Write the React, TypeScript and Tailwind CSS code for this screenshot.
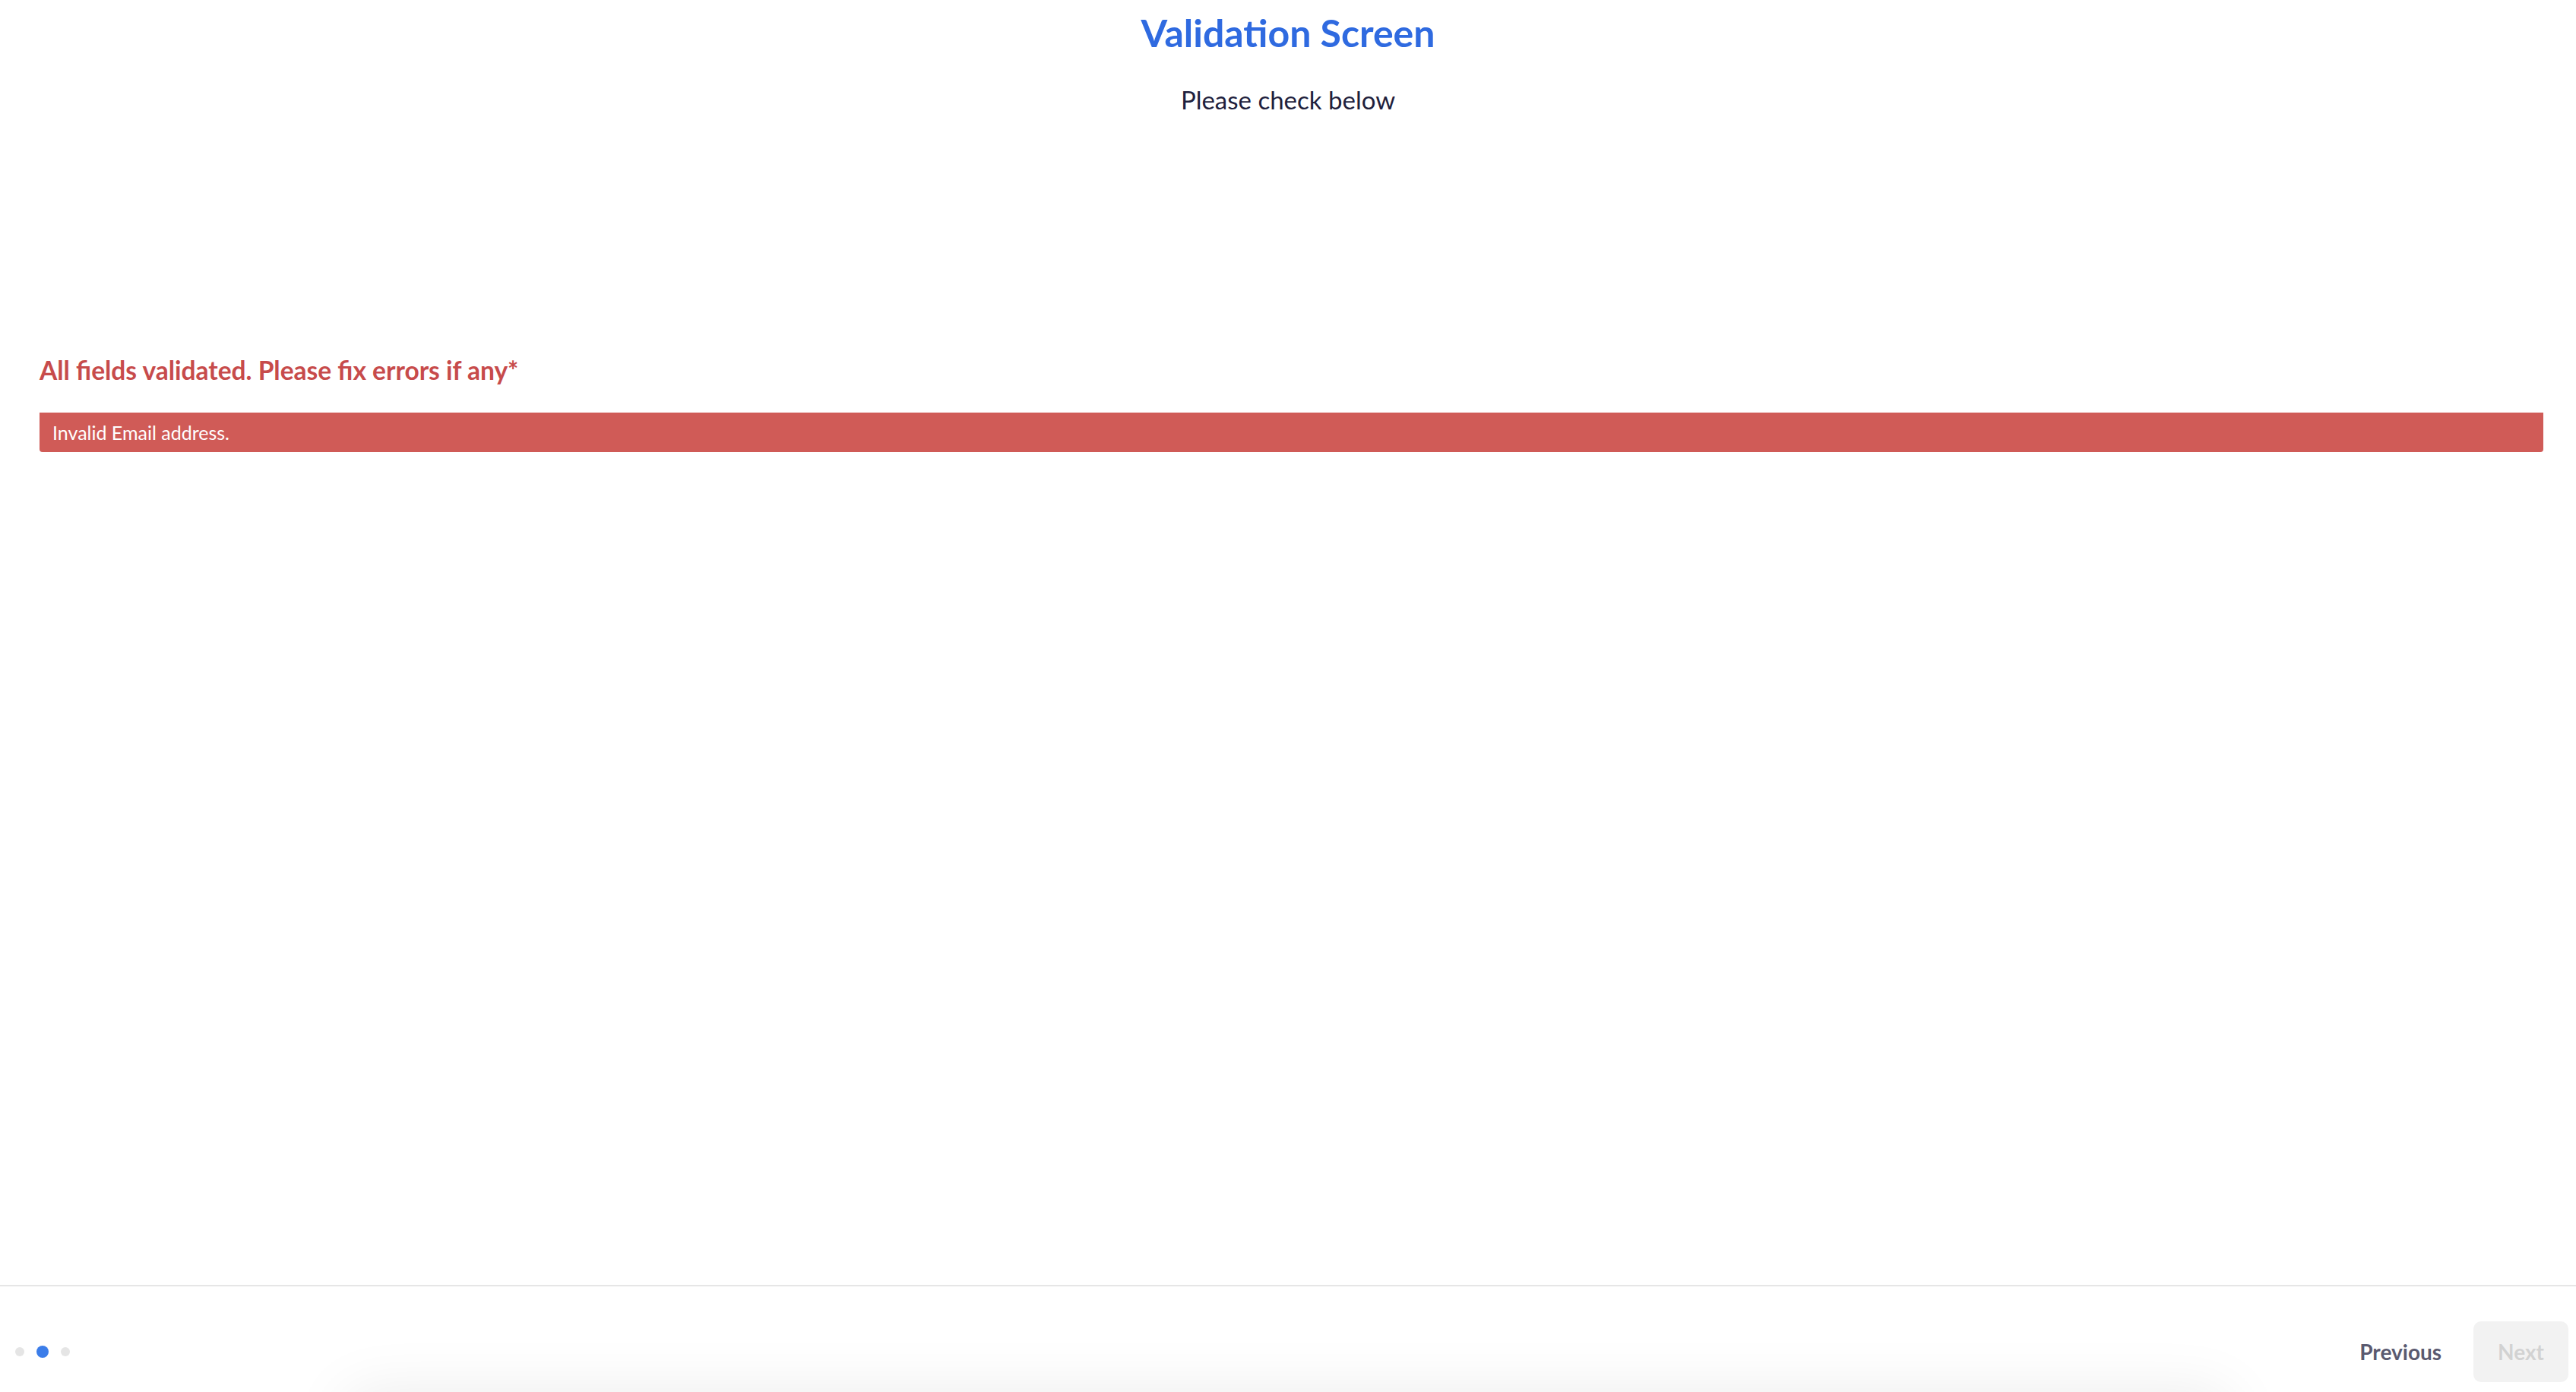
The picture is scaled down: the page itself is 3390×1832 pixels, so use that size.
export default function App() {
  return (
    <div className="h-screen overflow-hidden bg-white font-['Lato',sans-serif]">
      <div className="h-[1832px] flex flex-col">
        <main className="flex-1">
          {/* Header */}
          <h1 className="pt-[13px] text-center text-[50px] leading-[60px] font-bold text-[#2f6ae0]">
            Validation Screen
          </h1>
          <p className="mt-[38px] text-center text-[33px] leading-[40px] text-[#1f1f3d]">
            Please check below
          </p>

          {/* Validation result */}
          <section className="mt-[316px] pl-[52px] pr-[43px]">
            <h2 className="text-[33.5px] leading-[41px] font-bold text-[#c74b4b]">
              All fields validated. Please fix errors if any*
            </h2>
            <div className="mt-[35px] h-[52px] flex items-center px-[17px] bg-[#d05b57] rounded-b-[4px]">
              <span className="text-[25px] leading-[30px] text-white">Invalid Email address.</span>
            </div>
          </section>
        </main>

        {/* Footer: steps + navigation */}
        <footer className="h-[141px] shrink-0 border-t-2 border-[#e6e6e6] flex items-end">
          <div className="mb-[13px] h-[80px] w-full flex items-center justify-between pl-[20px] pr-[10px]">
            <div className="flex items-center gap-[16px]">
              <span className="w-[12px] h-[12px] rounded-full bg-[#e5e5e5]" />
              <span className="w-[16px] h-[16px] rounded-full bg-[#3b7de9]" />
              <span className="w-[12px] h-[12px] rounded-full bg-[#e5e5e5]" />
            </div>
            <div className="flex items-center gap-[10px]">
              <button className="h-[80px] px-[32px] rounded-[10px] text-[28px] font-bold text-[#5a5a70]">
                Previous
              </button>
              <button disabled className="h-[80px] px-[32px] rounded-[10px] bg-[#f2f2f2] text-[28px] font-bold text-[#d2d2d2]">
                Next
              </button>
            </div>
          </div>
        </footer>
      </div>

      {/* card below the fold, only its shadow shows */}
      <div className="mx-auto w-[2480px] h-[300px] rounded-[24px] bg-white shadow-[0_0_80px_rgba(0,0,0,0.08)]" />
    </div>
  );
}
